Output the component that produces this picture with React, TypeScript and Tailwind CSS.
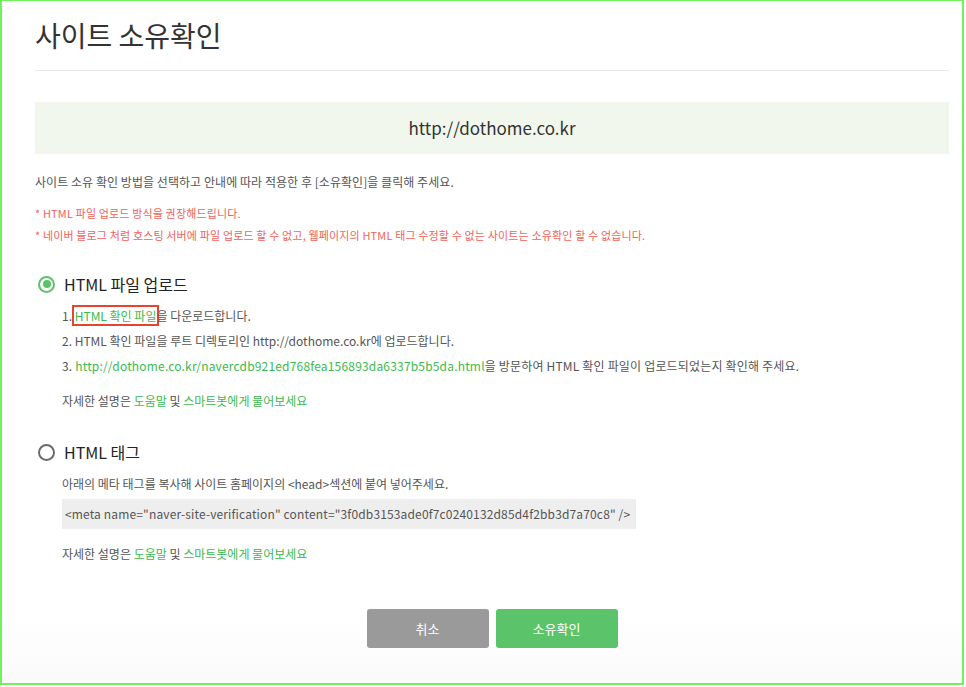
import { useState } from "react";

const font = { fontFamily: '"Noto Sans CJK KR", "Noto Sans", sans-serif' };

const HelpLine = () => (
  <p className="text-[12px] text-[#555]">
    자세한 설명은 <span className="text-[#3db84f]">도움말</span> 및{" "}
    <span className="text-[#3db84f]">스마트봇에게 물어보세요</span>
  </p>
);

const Radio = ({ checked }: { checked: boolean }) => (
  <span
    className={
      checked
        ? "flex h-[17px] w-[17px] items-center justify-center rounded-full border-2 border-[#5bc46a] bg-white"
        : "flex h-[17px] w-[17px] items-center justify-center rounded-full border-2 border-[#6a6a6a] bg-white"
    }
  >
    {checked && <span className="h-[8px] w-[8px] rounded-full bg-[#5bc46a]" />}
  </span>
);

export default function App() {
  const [method, setMethod] = useState<"file" | "tag">("file");

  return (
    <div style={font} className="h-[687px] w-[966px] bg-white">
      <div className="flex h-[685px] w-[964px] flex-col border-2 border-t border-[#70f35a] bg-gradient-to-b from-white from-90% to-[#fafafa]">
        <div className="pl-[33px] pr-[13px]">
          <h1 className="pt-[14px] text-[28px] leading-[40px] text-[#333]">
            사이트 소유확인
          </h1>
          <div className="mt-[15px] h-px bg-[#e6e6e6]" />

          <div className="mt-[31px] flex h-[52px] items-center justify-center bg-[#f1f7ec] text-[17px] text-[#333]">
            http://dothome.co.kr
          </div>

          <p className="mt-[19px] text-[12px] tracking-[0.05px] text-[#555]">
            사이트 소유 확인 방법을 선택하고 안내에 따라 적용한 후 [소유확인]을 클릭해 주세요.
          </p>
          <div className="mt-[14px] flex flex-col gap-[5px] text-[11px] tracking-[0.15px] text-[#f0635a]">
            <p>* HTML 파일 업로드 방식을 권장해드립니다.</p>
            <p>
              * 네이버 블로그 처럼 호스팅 서버에 파일 업로드 할 수 없고, 웹페이지의 HTML 태그 수정할 수
              없는 사이트는 소유확인 할 수 없습니다.
            </p>
          </div>

          <button
            onClick={() => setMethod("file")}
            className="mt-[29px] flex items-center gap-[9px] pl-[3px]"
          >
            <Radio checked={method === "file"} />
            <span className="text-[16px] text-[#222]">HTML 파일 업로드</span>
          </button>
          <div className="mt-[10px] flex flex-col gap-[6px] pl-[27px] text-[12px] leading-[19px] text-[#555]">
            <p>
              1.{" "}
              <span className="-mx-[3px] border-2 border-[#e8432f] px-[1px] text-[#3db84f]">
                HTML 확인 파일
              </span>
              을 다운로드합니다.
            </p>
            <p>2. HTML 확인 파일을 루트 디렉토리인 http://dothome.co.kr에 업로드합니다.</p>
            <p className="tracking-[0.18px]">
              3.{" "}
              <span className="text-[#3db84f]">
                http://dothome.co.kr/navercdb921ed768fea156893da6337b5b5da.html
              </span>
              을 방문하여 HTML 확인 파일이 업로드되었는지 확인해 주세요.
            </p>
            <div className="mt-[10px]">
              <HelpLine />
            </div>
          </div>

          <button
            onClick={() => setMethod("tag")}
            className="mt-[30px] flex items-center gap-[9px] pl-[3px]"
          >
            <Radio checked={method === "tag"} />
            <span className="text-[16px] text-[#222]">HTML 태그</span>
          </button>
          <div className="mt-[11px] pl-[27px] text-[12px] text-[#555]">
            <p>아래의 메타 태그를 복사해 사이트 홈페이지의 &lt;head&gt;섹션에 붙여 넣어주세요.</p>
            <div className="mt-[6px] flex h-[30px] w-[574px] items-center whitespace-nowrap bg-[#eeeeee] px-[3px] tracking-[0.15px]">
              &lt;meta name="naver-site-verification" content="3f0db3153ade0f7c0240132d85d4f2bb3d7a70c8" /&gt;
            </div>
            <div className="mt-[16px]">
              <HelpLine />
            </div>
          </div>

          <div className="mt-[46px] flex justify-center gap-[7px]">
            <button className="h-[39px] w-[122px] rounded-[3px] bg-[#9a9a9a] text-[13px] text-white">
              취소
            </button>
            <button className="h-[39px] w-[122px] rounded-[3px] bg-[#5bc46a] text-[13px] text-white">
              소유확인
            </button>
          </div>
        </div>
      </div>
    </div>
  );
}
